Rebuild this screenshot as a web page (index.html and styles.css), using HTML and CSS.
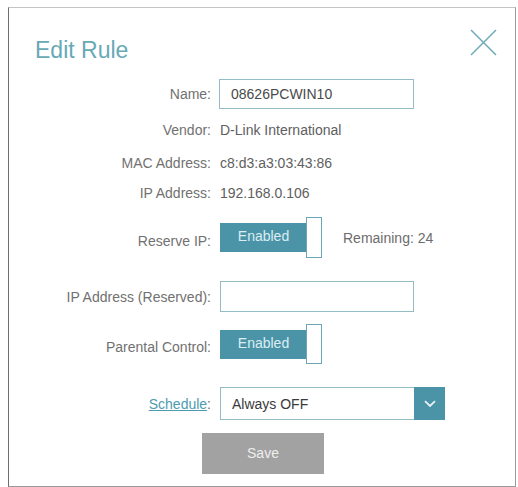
FILE: index.html
```html
<!DOCTYPE html>
<html>
<head>
<meta charset="utf-8">
<link rel="stylesheet" href="styles.css">
</head>
<body>
<div class="modal">
  <div class="header">
    <h1 class="title">Edit Rule</h1>
    <svg class="close" width="27" height="27" viewBox="0 0 27 27">
      <path d="M1 1 L26 26 M26 1 L1 26" stroke="#6eabb7" stroke-width="1.5" fill="none"/>
    </svg>
  </div>
  <div class="form">
    <div class="row r-name">
      <span class="label">Name:</span>
      <div class="input"><span class="input-text">08626PCWIN10</span></div>
    </div>
    <div class="row r-text r-vendor">
      <span class="label">Vendor:</span>
      <span class="value">D-Link International</span>
    </div>
    <div class="row r-text r-mac">
      <span class="label">MAC Address:</span>
      <span class="value">c8:d3:a3:03:43:86</span>
    </div>
    <div class="row r-text r-ip">
      <span class="label">IP Address:</span>
      <span class="value">192.168.0.106</span>
    </div>
    <div class="row r-toggle r-reserve">
      <span class="label label-low">Reserve IP:</span>
      <div class="toggle">
        <div class="toggle-on">Enabled</div>
        <div class="knob"></div>
      </div>
      <span class="remaining">Remaining: 24</span>
    </div>
    <div class="row r-ipres">
      <span class="label">IP Address (Reserved):</span>
      <div class="input input-ipres"></div>
    </div>
    <div class="row r-toggle r-parental">
      <span class="label label-low">Parental Control:</span>
      <div class="toggle">
        <div class="toggle-on">Enabled</div>
        <div class="knob"></div>
      </div>
    </div>
    <div class="row r-schedule">
      <span class="label"><a class="link">Schedule</a>:</span>
      <div class="select">
        <span class="select-text">Always OFF</span>
        <div class="select-btn">
          <svg width="12" height="8" viewBox="0 0 12 8">
            <path d="M1 1.2 L6 6 L11 1.2" stroke="#e6f2f5" stroke-width="1.8" fill="none"/>
          </svg>
        </div>
      </div>
    </div>
    <div class="save-row">
      <div class="save">Save</div>
    </div>
  </div>
</div>
</body>
</html>
```
FILE: styles.css
```css
html, body {
  margin: 0;
  padding: 0;
  background: #ffffff;
}
body {
  font-family: "Liberation Sans", Arial, sans-serif;
  width: 518px;
  height: 487px;
  overflow: hidden;
}
.modal {
  box-sizing: border-box;
  margin: 7px 0 0 8px;
  width: 508px;
  height: 480px;
  border: 1px solid #9a9a9a;
  border-top-color: #c4c4c4;
  border-left-color: #6e6e6e;
  background: #fff;
}
.header {
  display: flex;
  justify-content: space-between;
  align-items: flex-start;
  padding: 31px 18px 0 26px;
}
.title {
  margin: 0;
  font-size: 23px;
  line-height: 22px;
  font-weight: normal;
  color: #67a9b6;
}
.close {
  margin-top: -10px;
  display: block;
}
.form {
  margin-top: 18px;
}
.row {
  display: flex;
  align-items: center;
  font-size: 14px;
  color: #5c5c5c;
}
.label {
  box-sizing: border-box;
  width: 203px;
  text-align: right;
  color: #717171;
  flex: none;
  padding-right: 1px;
}
.label-low {
  position: relative;
  top: 3px;
}
.value {
  margin-left: 8px;
  color: #606060;
}
.r-text { height: 20px; }
.r-name { height: 30px; }
.r-vendor { margin-top: 11px; }
.r-mac { margin-top: 13px; }
.r-ip { margin-top: 10px; }
.r-reserve { margin-top: 14px; height: 41px; }
.r-ipres { margin-top: 23px; height: 31px; }
.r-parental { margin-top: 12px; height: 40px; }
.r-schedule { margin-top: 23px; height: 33px; }

.input {
  box-sizing: border-box;
  margin-left: 7px;
  width: 195px;
  height: 30px;
  border: 1px solid #93bcc5;
  display: flex;
  align-items: center;
  padding-left: 11px;
}
.input-ipres {
  margin-left: 8px;
  width: 194px;
  height: 31px;
}
.input-text {
  color: #4a4a4a;
  font-size: 14px;
}
.toggle {
  margin-left: 8px;
  display: flex;
  align-items: center;
  height: 100%;
}
.toggle-on {
  box-sizing: border-box;
  width: 87px;
  height: 29px;
  background: #4b94a8;
  color: #dcedf2;
  font-size: 14px;
  text-align: center;
  line-height: 26px;
}
.knob {
  box-sizing: border-box;
  width: 16px;
  height: 100%;
  margin-left: -1px;
  border: 1px solid #6aa6b5;
  background: #fff;
}
.remaining {
  margin-left: 21px;
  color: #6c6c6c;
  font-size: 14px;
}
.link {
  color: #4e9bb0;
  text-decoration: underline;
}
.select {
  box-sizing: border-box;
  margin-left: 8px;
  width: 225px;
  height: 33px;
  border: 1px solid #93bcc5;
  display: flex;
  align-items: center;
}
.select-text {
  flex: 1;
  padding-left: 11px;
  color: #3a3a3a;
  font-size: 14px;
}
.select-btn {
  width: 31px;
  height: 33px;
  margin-right: -1px;
  background: #4b94a8;
  display: flex;
  align-items: center;
  justify-content: center;
}
.select-btn svg { display: block; }
.save-row {
  display: flex;
  margin-top: 13px;
  padding-left: 193px;
}
.save {
  width: 122px;
  height: 41px;
  background: #a2a2a2;
  color: #eeeeee;
  font-size: 14px;
  text-align: center;
  line-height: 40px;
}
```
